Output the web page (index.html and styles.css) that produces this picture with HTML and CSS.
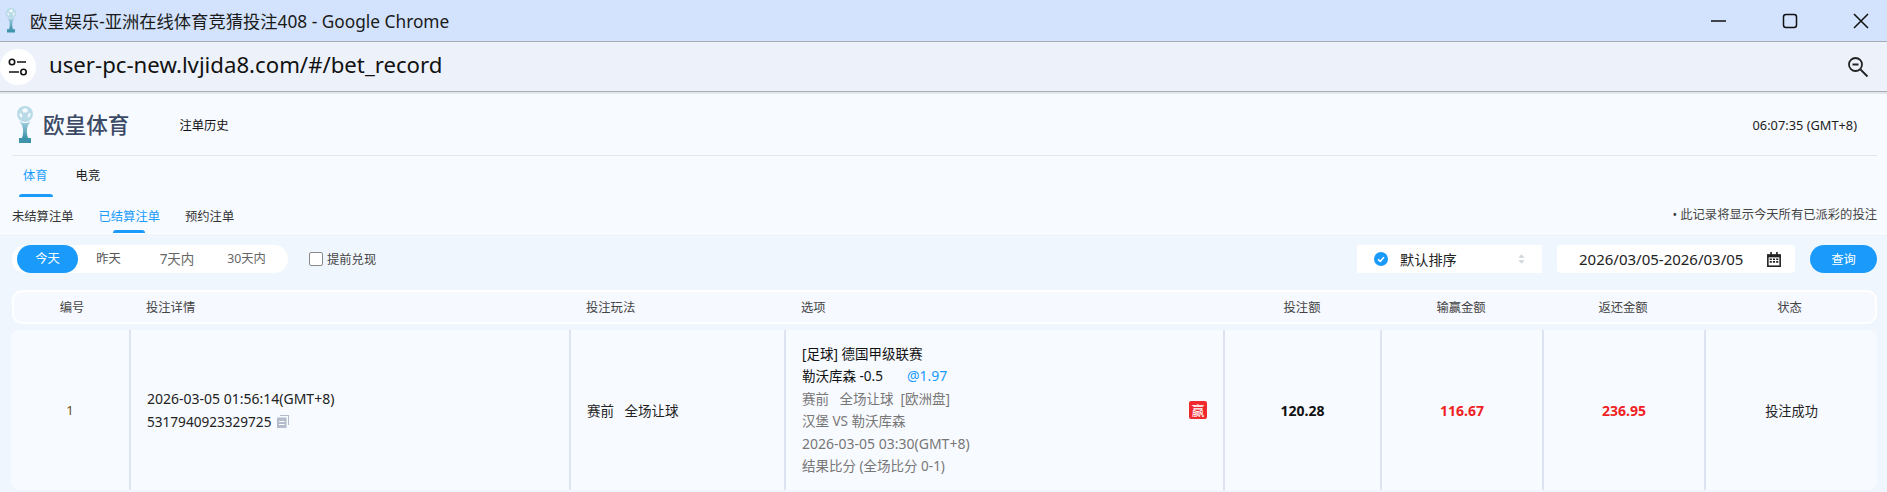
FILE: index.html
```html
<!DOCTYPE html>
<html lang="zh-CN">
<head>
<meta charset="utf-8">
<title>欧皇娱乐-亚洲在线体育竞猜投注408</title>
<link rel="stylesheet" href="styles.css">
</head>
<body>
<svg width="0" height="0" class="defs">
  <defs>
    <linearGradient id="cup" x1="0" y1="0" x2="0" y2="1"><stop offset="0" stop-color="#a9d3e3"/><stop offset="1" stop-color="#3f93ab"/></linearGradient>
    <symbol id="trophy" viewBox="0 0 18 38">
      <circle cx="9" cy="8" r="8" fill="#b9dbe8"/>
      <path d="M6 3.500l3-1.500 3 1.500-1 3H7zM3 8l2-1 1.500 3-1.500 2zM15 8l-2-1-1.500 3 1.500 2z" fill="#f4fafc"/>
      <path d="M3 15c2 2 3.500 5 4 8 .3 3 .1 6-1 9h6c-1.100-3-1.300-6-1-9 .5-3 2-6 4-8-2 1.500-3.500 2-6 2S5 16.500 3 15z" fill="url(#cup)"/>
      <path d="M3 32h12v5H3z" fill="#3f93ab"/>
    </symbol>
  </defs>
</svg>
<header class="titlebar">
  <svg class="favicon"><use href="#trophy"/></svg>
  <span class="title">欧皇娱乐-亚洲在线体育竞猜投注408 - Google Chrome</span>
  <div class="winbtns">
    <svg class="winbtn" width="16" height="16" viewBox="0 0 16 16"><path d="M0 8h15" stroke="#111" stroke-width="1.500"/></svg>
    <svg class="winbtn" width="16" height="16" viewBox="0 0 16 16"><rect x="1.500" y="1.500" width="13" height="13" rx="2.500" fill="none" stroke="#111" stroke-width="1.500"/></svg>
    <svg class="winbtn" width="16" height="16" viewBox="0 0 16 16"><path d="M1 1l14 14M15 1L1 15" stroke="#111" stroke-width="1.500"/></svg>
  </div>
</header>
<div class="addressbar">
  <span class="siteinfo">
    <svg width="20" height="18" viewBox="0 0 20 18"><circle cx="4" cy="4" r="2.700" fill="none" stroke="#111" stroke-width="1.600"/><path d="M9 4h9M1 14h10" stroke="#111" stroke-width="1.600"/><circle cx="15.500" cy="14" r="2.700" fill="none" stroke="#111" stroke-width="1.600"/></svg>
  </span>
  <span class="url">user-pc-new.lvjida8.com/#/bet_record</span>
  <svg class="zoomicon" width="22" height="22" viewBox="0 0 22 22"><circle cx="8.500" cy="8.500" r="6.500" fill="none" stroke="#222" stroke-width="1.800"/><path d="M5.500 8.500h6M13.500 13.500l7 7" stroke="#222" stroke-width="1.800"/></svg>
</div>
<main class="page">
  <div class="toprow">
    <svg class="logo"><use href="#trophy"/></svg>
    <span class="brand">欧皇体育</span>
    <span class="history">注单历史</span>
    <span class="clock">06:07:35 (GMT+8)</span>
  </div>
  <nav class="tabs">
    <span class="tab tab-on">体育</span>
    <span class="tab">电竞</span>
  </nav>
  <div class="subrow">
    <nav class="subtabs">
      <span class="subtab">未结算注单</span>
      <span class="subtab subtab-on">已结算注单</span>
      <span class="subtab">预约注单</span>
    </nav>
    <span class="notice">• 此记录将显示今天所有已派彩的投注</span>
  </div>
  <section class="panel">
    <div class="filters">
      <div class="pills">
        <span class="pill pill-on">今天</span>
        <span class="pill">昨天</span>
        <span class="pill pill-week">7天内</span>
        <span class="pill pill-month">30天内</span>
      </div>
      <label class="early"><span class="box"></span>提前兑现</label>
      <div class="sort">
        <svg width="14" height="14" viewBox="0 0 13 13"><circle cx="6.500" cy="6.500" r="6.500" fill="#1a9bfc"/><path d="M3.800 6.800l2 1.800 3.400-3.800" fill="none" stroke="#fff" stroke-width="1.500"/></svg>
        <span class="sortlabel">默认排序</span>
        <svg class="updown" width="7" height="12" viewBox="0 0 8 11"><path d="M4 0l3.500 4.200h-7zM4 11L.5 6.800h7z" fill="#d0d4dc"/></svg>
      </div>
      <div class="daterange">
        <span>2026/03/05-2026/03/05</span>
        <svg width="14" height="15" viewBox="0 0 13 14"><path d="M0 2h13v12H0z" fill="#222"/><path d="M3 0h1.500v3H3zM8.500 0H10v3H8.500z" fill="#222"/><path d="M1.500 5h10v7.500h-10z" fill="#fff"/><path d="M2.500 6h2v1.500h-2zM5.500 6h2v1.500h-2zM8.500 6h2v1.500h-2zM2.500 8.500h2V10h-2zM5.500 8.500h2V10h-2zM8.500 8.500h2V10h-2z" fill="#222"/></svg>
      </div>
      <button class="query">查询</button>
    </div>
    <div class="thead cols">
      <span class="c-center">编号</span>
      <span class="c-left">投注详情</span>
      <span class="c-left">投注玩法</span>
      <span class="c-left c-opt">选项</span>
      <span class="c-center">投注额</span>
      <span class="c-center">输赢金额</span>
      <span class="c-center">返还金额</span>
      <span class="c-center">状态</span>
    </div>
    <div class="trow cols">
      <div class="cell cell-center idx">1</div>
      <div class="cell detail">
        <div>2026-03-05 01:56:14(GMT+8)</div>
        <div class="orderno">5317940923329725
          <svg width="12" height="13" viewBox="0 0 12 13"><path d="M3 0h9v10h-1V1H3z" fill="#b4bbca"/><path d="M0 2.500h9.500V13H0z" fill="#b4bbca"/><path d="M2 6h5.500v1H2zM2 9h5.500v1H2z" fill="#fff"/></svg>
        </div>
      </div>
      <div class="cell play">赛前&nbsp;&nbsp;&nbsp;全场让球</div>
      <div class="cell option">
        <div class="optlines">
          <div class="dark">[足球] 德国甲级联赛</div>
          <div class="dark">勒沃库森 -0.5<span class="odds">@1.97</span></div>
          <div>赛前&nbsp;&nbsp;&nbsp;全场让球&nbsp;&nbsp;[欧洲盘]</div>
          <div>汉堡 VS 勒沃库森</div>
          <div class="opttime">2026-03-05 03:30(GMT+8)</div>
          <div>结果比分 (全场比分 0-1)</div>
        </div>
        <span class="win">赢</span>
      </div>
      <div class="cell cell-center money">120.28</div>
      <div class="cell cell-center money red">116.67</div>
      <div class="cell cell-center money red">236.95</div>
      <div class="cell cell-center status">投注成功</div>
    </div>
  </section>
</main>
</body>
</html>
```
FILE: styles.css
```css
* { box-sizing: border-box; }
html, body { margin: 0; height: 492px; overflow: hidden; }
body { font-family: "Noto Sans", "Noto Sans CJK SC", sans-serif; font-size: 12.3px; color: #222; background: #f7faff; }
.defs { position: absolute; }

.titlebar { height: 42px; display: flex; align-items: center; background: #d3e3fd; border-bottom: 1px solid #a8adb5; padding-left: 5px; }
.favicon { width: 12px; height: 27px; }
.title { margin-left: 13px; font-size: 17.3px; color: #1a1a1a; }
.winbtns { margin-left: auto; display: flex; align-items: center; gap: 55px; padding-right: 18px; }

.addressbar { height: 50px; display: flex; align-items: center; background: #edf2fa; border-bottom: 1px solid #a8adb5; }
.siteinfo { width: 36px; height: 36px; border-radius: 50%; background: #fff; display: flex; align-items: center; justify-content: center; }
.url { margin: 0 0 4px 13px; font-size: 22.2px; color: #111; }
.zoomicon { margin-left: auto; margin-right: 18px; }

.page { border-top: 2px solid #e3e7ec; }
.toprow { height: 62px; margin: 0 10px 0 12px; display: flex; align-items: center; border-bottom: 1px solid #e3e6ee; }
.logo { width: 18px; height: 38px; margin-left: 4px; }
.brand { margin: 0 0 2px 9px; font-size: 21.6px; font-weight: 500; color: #3c4a66; }
.history { margin-left: 50px; color: #111; }
.clock { margin-left: auto; margin-right: 20px; font-size: 12.8px; color: #222; }

.tabs { display: flex; gap: 28px; padding-left: 23px; height: 41px; }
.tab { height: 41px; line-height: 39px; position: relative; }
.tab-on { color: #1a9bfc; }
.tab-on::after { content: ""; position: absolute; left: -4px; right: -5px; bottom: 0; height: 3px; border-radius: 3px 3px 0 0; background: #1a9bfc; }

.subrow { height: 36px; display: flex; justify-content: space-between; padding: 0 10px 0 12px; }
.subtabs { display: flex; gap: 25px; }
.subtab { line-height: 39px; position: relative; color: #333; }
.subtab-on { color: #1a9bfc; }
.subtab-on::after { content: ""; position: absolute; left: 14px; right: 15px; bottom: 0; height: 3px; border-radius: 3px 3px 0 0; background: #1a9bfc; }
.notice { line-height: 36px; color: #444; }

.panel { background: #f0f6fe; padding: 11px 10px 0; border-top: 1px solid #fff; height: 260px; }
.filters { height: 28px; display: flex; align-items: center; padding-left: 2px; }
.pills { display: flex; height: 28px; padding: 0 10px 0 5px; background: #fff; border-radius: 14px; }
.pill { width: 61px; line-height: 28px; text-align: center; color: #555; border-radius: 14px; }
.pill-week { width: 76px; font-size: 13.5px; color: #666; }
.pill-month { width: 63px; color: #666; }
.pill-on { background: #1a9bfc; color: #fff; }
.early { display: flex; align-items: center; margin-left: 21px; color: #444; }
.box { width: 14px; height: 14px; margin-right: 4px; background: #fff; border: 1px solid #8a8a8a; border-radius: 2px; }
.sort { width: 185px; height: 28px; margin-left: auto; padding: 0 17px; display: flex; align-items: center; background: #fff; font-size: 14.200px; color: #222; }
.sortlabel { margin-left: 12px; }
.updown { margin-left: auto; }
.daterange { width: 238px; height: 28px; margin-left: 15px; padding: 0 14px 0 22px; display: flex; align-items: center; justify-content: space-between; background: #fff; border-radius: 4px; font-size: 15px; color: #222; }
.query { width: 67px; height: 28px; margin-left: 15px; padding: 0; border: 0; border-radius: 14px; background: #1a9bfc; color: #fff; font: inherit; }

.cols { display: grid; grid-template-columns: 118px 440px 215px 439px 157px 162px 162px 1fr; }
.thead { height: 34px; margin: 17px 0 0 2px; align-items: center; background: #f6f9ff; border: 2px solid #fff; border-radius: 10px; color: #444; grid-template-columns: 116px 440px 215px 439px 156px 162px 162px 1fr; }
.c-center { text-align: center; }
.c-left { padding-left: 16px; }
.trow { height: 160px; margin-top: 6px; margin-left: 1px; background: #f7faff; border-radius: 8px; }
.cell { display: flex; align-items: center; border-left: 2px solid #dde3f0; }
.cell:first-child { border-left: 0; }
.cell-center { justify-content: center; }
.idx { color: #6b4a12; font-size: 13px; }
.detail { flex-direction: column; align-items: flex-start; justify-content: center; padding-left: 16px; font-size: 14px; line-height: 23px; color: #222; }
.orderno { display: flex; align-items: center; gap: 6px; font-size: 13.6px; }
.play { padding-left: 16px; font-size: 13.5px; color: #222; }
.option { padding-left: 16px; padding-right: 16px; justify-content: space-between; }
.optlines { font-size: 13.5px; line-height: 22.500px; color: #777; }
.opttime { font-size: 14px; }
.dark { color: #111; }
.odds { margin-left: 24px; color: #1a9bfc; font-size: 14px; }
.win { width: 18px; height: 18px; line-height: 18px; text-align: center; border-radius: 2px; background: #f0292c; color: #fff; font-size: 13px; }
.money { font-size: 14px; font-weight: 700; color: #111; }
.red { color: #f01f24; }
.status { font-size: 13.200px; color: #222; }
```
